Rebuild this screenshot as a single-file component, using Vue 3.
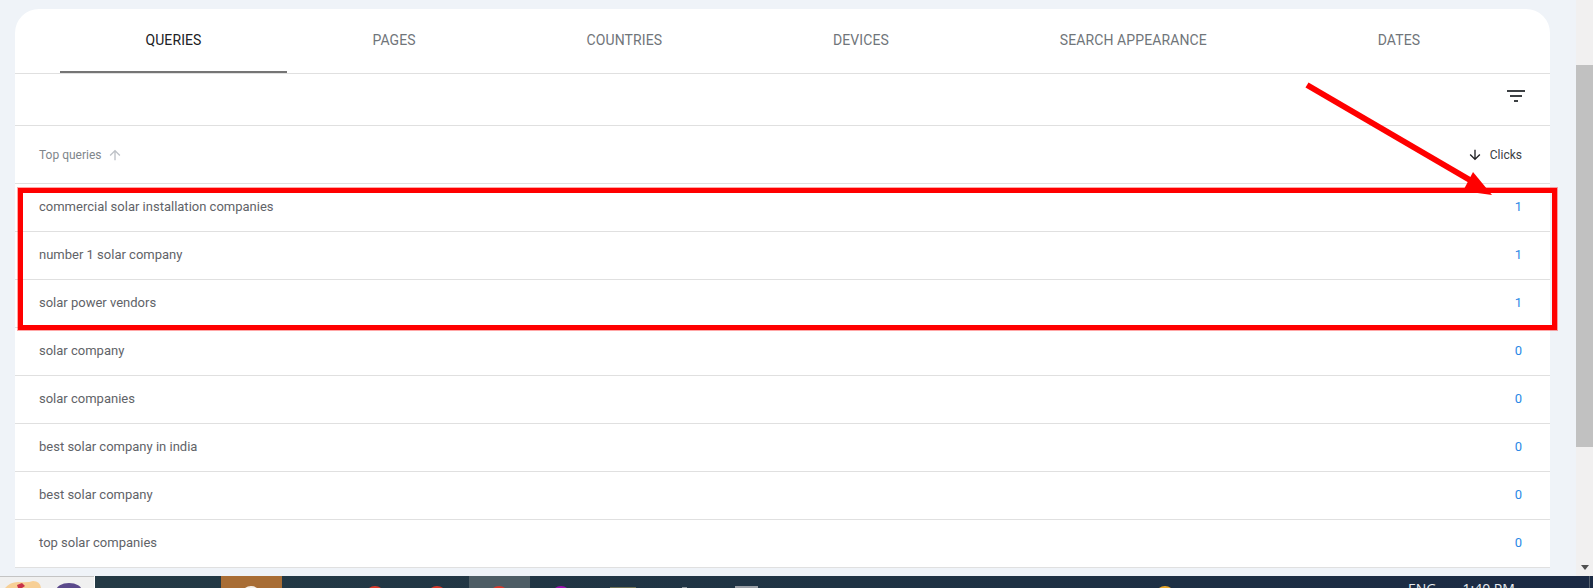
<script setup>
const tabs = ['QUERIES', 'PAGES', 'COUNTRIES', 'DEVICES', 'SEARCH APPEARANCE', 'DATES']

const rows = [
  { query: 'commercial solar installation companies', clicks: 1 },
  { query: 'number 1 solar company', clicks: 1 },
  { query: 'solar power vendors', clicks: 1 },
  { query: 'solar company', clicks: 0 },
  { query: 'solar companies', clicks: 0 },
  { query: 'best solar company in india', clicks: 0 },
  { query: 'best solar company', clicks: 0 },
  { query: 'top solar companies', clicks: 0 },
]
</script>

<template>
  <div class="screen">
    <div class="window">
      <div class="page">
        <div class="card">
          <div class="tabs">
            <div v-for="(tab, i) in tabs" :key="tab" :class="'tab' + (i == 0 ? ' active' : '')">{{ tab }}</div>
          </div>
          <div class="toolbar">
            <svg class="filter" viewBox="0 0 24 24" width="24" height="24">
              <path d="M10 18h4v-2h-4v2zM3 6v2h18V6H3zm3 7h12v-2H6v2z" />
            </svg>
          </div>
          <div class="head">
            <div class="head-query">
              Top queries
              <svg viewBox="0 0 24 24" width="16" height="16">
                <path d="M4 12l1.41 1.41L11 7.83V20h2V7.83l5.58 5.59L20 12l-8-8-8 8z" />
              </svg>
            </div>
            <div class="head-clicks">
              <svg viewBox="0 0 24 24" width="16" height="16">
                <path d="M20 12l-1.41-1.41L13 16.17V4h-2v12.17l-5.58-5.59L4 12l8 8 8-8z" />
              </svg>
              Clicks
            </div>
          </div>
          <div v-for="row in rows" :key="row.query" class="row">
            <span>{{ row.query }}</span>
            <span class="clicks">{{ row.clicks }}</span>
          </div>
        </div>
      </div>
      <div class="scrollbar">
        <div class="track-top"></div>
        <div class="thumb"></div>
        <div class="track-bottom">
          <div class="scroll-arrow"></div>
        </div>
      </div>

      <!-- red markup drawn on top of the screenshot -->
      <div class="markup-box"></div>
      <svg class="markup-arrow" width="1593" height="588" viewBox="0 0 1593 588">
        <line x1="1307" y1="85" x2="1475" y2="183" stroke="#f00" stroke-width="6" />
        <polygon points="1473,172 1463,191 1492,195" fill="#f00" />
      </svg>
    </div>

    <div class="taskbar">
      <div class="pinned">
        <svg width="94" height="11" viewBox="0 0 94 11">
          <path d="M5 11 Q10 5 18 5 Q28 6 33 4 Q40 4 41 11z" fill="#f7cf95" />
          <path d="M17 8 L22 6 L25 9 L22 11 L18 11z" fill="#c8324a" />
          <ellipse cx="69" cy="14" rx="13" ry="8" fill="#5b4a8c" />
        </svg>
      </div>
      <div class="apps">
        <svg class="app-icons" width="1498" height="12" viewBox="95 576 1498 12">
          <rect x="221" y="576" width="61" height="12" fill="#a86d35" />
          <rect x="469" y="576" width="61" height="12" fill="#4d5d65" />
          <circle cx="251" cy="596" r="10" fill="#f4efe8" />
          <circle cx="375" cy="596" r="10" fill="#d8392b" />
          <circle cx="437" cy="596" r="10" fill="#d8392b" />
          <circle cx="499" cy="596" r="10" fill="#d8392b" />
          <circle cx="561" cy="596" r="10" fill="#9c0fb0" />
          <rect x="610" y="587" width="26" height="1" fill="#6f7256" />
          <rect x="682" y="587" width="5" height="1" fill="#8b959b" />
          <rect x="735" y="586" width="23" height="2" fill="#9a9fa6" />
          <circle cx="1165" cy="596" r="10" fill="#e8a628" />
          <rect x="1589" y="576" width="1" height="12" fill="#55606e" />
        </svg>
        <div class="tray">
          <span>ENG</span>
          <span>1:40 PM</span>
        </div>
      </div>
    </div>
  </div>
</template>

<style scoped>
.screen {
  width: 1593px;
  height: 588px;
  overflow: hidden;
  display: flex;
  flex-direction: column;
  font-family: Roboto, sans-serif;
}
.window {
  height: 576px;
  display: flex;
  position: relative;
  background: #fff;
}
.page {
  width: 1576px;
  padding: 9px 26px 0 15px;
  box-sizing: border-box;
  background: #eff3f8;
  overflow: hidden;
}
.card {
  background: #fff;
  border-radius: 24px 24px 0 0;
  height: 559px;
}
.tabs {
  display: flex;
  height: 65px;
  padding-left: 45px;
  box-sizing: border-box;
  border-bottom: 1px solid #e0e0e0;
}
.tab {
  padding: 23px 85.45px 0;
  height: 64px;
  box-sizing: border-box;
  font-size: 14px;
  line-height: 16px;
  color: #70757a;
  letter-spacing: 0.1px;
  white-space: nowrap;
}
.tab.active {
  color: #202124;
  border-bottom: 2px solid #757575;
}
.toolbar {
  height: 52px;
  box-sizing: border-box;
  border-bottom: 1px solid #e0e0e0;
  display: flex;
  justify-content: flex-end;
  align-items: center;
  padding: 0 22px 8px 0;
}
.filter { fill: #3c4043; }
.head {
  height: 58px;
  box-sizing: border-box;
  border-bottom: 1px solid #e0e0e0;
  display: flex;
  justify-content: space-between;
  align-items: center;
  padding: 0 28px 0 24px;
  font-size: 12px;
}
.head-query {
  display: flex;
  align-items: center;
  gap: 6px;
  color: #80868b;
}
.head-query svg { fill: #bdc1c6; }
.head-clicks {
  display: flex;
  align-items: center;
  gap: 7px;
  color: #3c4043;
}
.head-clicks svg { fill: #202124; }
.row {
  height: 48px;
  box-sizing: border-box;
  border-bottom: 1px solid #e0e0e0;
  display: flex;
  justify-content: space-between;
  align-items: center;
  padding: 0 28px 2px 24px;
  font-size: 13px;
  color: #5f6368;
}
.clicks { color: #2b88e6; }
.scrollbar {
  width: 17px;
  display: flex;
  flex-direction: column;
}
.track-top {
  height: 65px;
  background: #f1f0f0;
}
.thumb {
  height: 382px;
  background: #c1c1c1;
}
.track-bottom {
  flex: 1;
  background: #f1f0f0;
  display: flex;
  justify-content: center;
  align-items: flex-end;
  padding-bottom: 6px;
}
.scroll-arrow {
  width: 0;
  height: 0;
  border-left: 4.5px solid transparent;
  border-right: 4.5px solid transparent;
  border-top: 5px solid #505050;
}
.markup-box {
  position: absolute;
  left: 18px;
  top: 188px;
  width: 1539px;
  height: 142px;
  box-sizing: border-box;
  border: 5px solid #f00;
  box-shadow: 0 0 0 1px rgba(255, 0, 0, 0.35);
}
.markup-arrow {
  position: absolute;
  left: 0;
  top: 0;
  pointer-events: none;
}
.taskbar {
  height: 12px;
  display: flex;
  overflow: hidden;
}
.pinned {
  width: 94px;
  border-top: 1px solid #c4c4c4;
  background: #f0f0f0;
  box-sizing: border-box;
  margin-right: 1px;
}
.pinned svg, .app-icons { display: block; }
.apps {
  flex: 1;
  position: relative;
  background: linear-gradient(to right, #243a45, #1f3344 50%, #1b2a44);
}
.app-icons {
  position: absolute;
  left: 0;
  top: 0;
}
.tray {
  position: absolute;
  left: 1313px;
  top: 4px;
  display: flex;
  gap: 26px;
  font-family: "Open Sans", sans-serif;
  font-size: 14px;
  line-height: 18px;
  color: #e8ecf0;
  white-space: nowrap;
}
</style>

<style>
body { background: #fff; }
</style>
